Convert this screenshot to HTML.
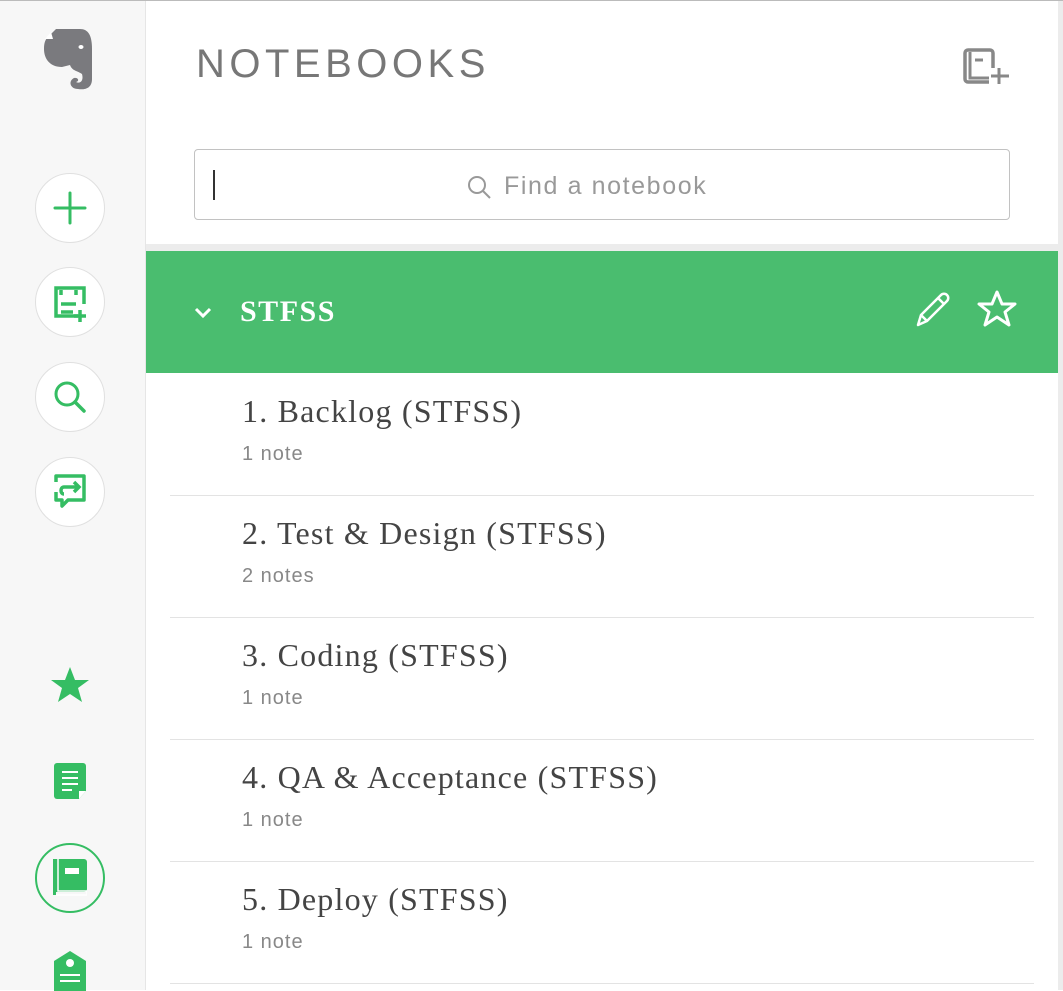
<!DOCTYPE html><html><head><style>
body{margin:0;width:1063px;height:990px;overflow:hidden;background:#fff;font-family:"Liberation Sans",sans-serif;position:relative}
.top{position:absolute;left:0;top:0;width:1063px;height:1px;background:#bbb}
.side{position:absolute;left:0;top:1px;width:145px;height:989px;background:#f7f7f7;border-right:1px solid #e6e6e6}
.rs{position:absolute;left:1058px;top:1px;width:5px;height:989px;background:#ececec}
.c{position:absolute;left:35px;width:68px;height:68px;border-radius:50%;background:#fff;border:1px solid #e0e0e0;display:flex;align-items:center;justify-content:center}
.h{position:absolute;left:196px;top:42px;font-size:40px;color:#777;letter-spacing:4.5px;font-weight:300}
.search{position:absolute;left:194px;top:149px;width:816px;height:71px;border:1px solid #c2c2c2;border-radius:4px;box-sizing:border-box}
.gray{position:absolute;left:146px;top:244px;width:912px;height:7px;background:#ececec}
.bar{position:absolute;left:146px;top:251px;width:912px;height:122px;background:#4abd6f}
.row{position:absolute;left:170px;width:864px;height:122px;border-bottom:1px solid #e3e3e3}
.t{position:absolute;left:72px;top:20px;font-family:"Liberation Serif",serif;font-size:32px;color:#444;letter-spacing:1.2px}
.s{position:absolute;left:72px;top:70px;font-size:20px;color:#888;letter-spacing:1px}
</style></head><body>
<div class="top"></div>
<div class="side">
<svg style="position:absolute;left:42px;top:28px" width="52" height="62" viewBox="0 0 52 62"><path d="M8 6 L14 0 H38 C46 0 50 6 50 20 V50 C50 60 42 61 36 60 C28 60 26 52 32 49 C36 48 38 52 34 53 C38 55 42 52 40 45 C36 42 30 42 28 36 L20 38 C8 38 2 30 2 20 C2 14 3 10 8 6Z" fill="#7a7a7e"/><path d="M9 3 L3 10 H11Z" fill="#fff"/><ellipse cx="39" cy="18" rx="2.5" ry="2" fill="#fff"/></svg>
<div class="c" style="top:172px"><svg width="34" height="34"><path d="M17 2V32M2 17H32" stroke="#35bd63" stroke-width="3" stroke-linecap="round"/></svg></div>
<div class="c" style="top:266px"><svg width="40" height="40" viewBox="0 0 40 40"><path d="M28 34H6V6H34V22" fill="none" stroke="#35bd63" stroke-width="3.5"/><path d="M11 8v5M26 8v5M11 22h15M11 30h12M30 28v12M24 34h12" stroke="#35bd63" stroke-width="3.5"/></svg></div>
<div class="c" style="top:361px"><svg width="40" height="40"><circle cx="17" cy="17" r="11" fill="none" stroke="#35bd63" stroke-width="3"/><path d="M25 25l9 9" stroke="#35bd63" stroke-width="3.5" stroke-linecap="round"/></svg></div>
<div class="c" style="top:456px"><svg width="40" height="40"><path d="M6 10V4H34V28H18L12 34V28H6V20" fill="none" stroke="#35bd63" stroke-width="3.5" stroke-linejoin="round"/><path d="M24 10l5 5-5 5M28 15H14C10 15 10 22 14 22" fill="none" stroke="#35bd63" stroke-width="3.5"/></svg></div>
<svg style="position:absolute;left:50px;top:665px" width="40" height="38"><path d="M20 1l5 13h14l-11 8 4 14-12-8-12 8 4-14L1 14h14z" fill="#35bd63"/></svg>
<svg style="position:absolute;left:54px;top:762px" width="33" height="38"><path d="M3 0H29a3 3 0 0 1 3 3V28L25 36H3a3 3 0 0 1-3-3V3a3 3 0 0 1 3-3z" fill="#35bd63"/><path d="M8 9h16M8 15h16M8 21h16M8 27h10" stroke="#fff" stroke-width="2"/><path d="M25 36V28H32" fill="#fff"/></svg>
<div class="c" style="top:842px;border:2px solid #35bd63;background:none;width:66px;height:66px"><svg width="34" height="38"><path d="M3 0H31a3 3 0 0 1 3 3V30a3 3 0 0 1-3 3H3z" fill="#35bd63"/><rect x="0" y="0" width="3" height="36" fill="#35bd63"/><path d="M5 0V32H34V36H3" fill="none" stroke="#fff" stroke-width="1.5"/><rect x="12" y="9" width="14" height="6" fill="#fff"/></svg></div>
<svg style="position:absolute;left:54px;top:950px" width="33" height="40"><path d="M0 10L16 0L32 10V40H0z" fill="#35bd63"/><circle cx="16" cy="12" r="4" fill="#fff"/><path d="M6 24h20M6 30h20" stroke="#fff" stroke-width="2"/></svg>
</div>
<div class="rs"></div>
<div class="h">NOTEBOOKS</div>
<svg style="position:absolute;left:963px;top:48px" width="48" height="38"><rect x="2" y="2" width="28" height="32" rx="3" fill="none" stroke="#888" stroke-width="3.5"/><path d="M7 4V30H28M12 12h8" fill="none" stroke="#888" stroke-width="3"/><rect x="26" y="20" width="20" height="18" fill="#fff"/><path d="M36 20V36M28 28H46" stroke="#888" stroke-width="3"/></svg>
<div class="search"><div style="position:absolute;left:18px;top:20px;width:2px;height:30px;background:#333"></div>
<svg style="position:absolute;left:272px;top:25px" width="26" height="26"><circle cx="10" cy="10" r="8" fill="none" stroke="#999" stroke-width="2"/><path d="M16 16l7 7" stroke="#999" stroke-width="2"/></svg>
<div style="position:absolute;left:309px;top:22px;font-size:25px;color:#999;letter-spacing:1.6px">Find a notebook</div></div>
<div class="gray"></div>
<div class="bar"><svg style="position:absolute;left:47px;top:55px" width="20" height="14"><path d="M3 3l7 7 7-7" fill="none" stroke="#fff" stroke-width="3"/></svg>
<div style="position:absolute;left:94px;top:44px;font-family:'Liberation Serif',serif;font-weight:bold;color:#fff;font-size:30px;letter-spacing:1.5px">STFSS</div>
<svg style="position:absolute;left:768px;top:40px" width="40" height="38"><path d="M4 34l3-10L27 4a4 4 0 0 1 6 6L13 30z M7 24l6 6M24 7l6 6" fill="none" stroke="#fff" stroke-width="2.5" stroke-linejoin="round"/></svg>
<svg style="position:absolute;left:831px;top:39px" width="40" height="38"><path d="M20 2l5 12h13l-10 8 4 13-12-8-12 8 4-13L2 14h13z" fill="none" stroke="#fff" stroke-width="3" stroke-linejoin="round"/></svg></div>
<div class="row" style="top:373px"><div class="t">1. Backlog (STFSS)</div><div class="s">1 note</div></div>
<div class="row" style="top:495px"><div class="t">2. Test &amp; Design (STFSS)</div><div class="s">2 notes</div></div>
<div class="row" style="top:617px"><div class="t">3. Coding (STFSS)</div><div class="s">1 note</div></div>
<div class="row" style="top:739px"><div class="t">4. QA &amp; Acceptance (STFSS)</div><div class="s">1 note</div></div>
<div class="row" style="top:861px"><div class="t">5. Deploy (STFSS)</div><div class="s">1 note</div></div>
</body></html>
